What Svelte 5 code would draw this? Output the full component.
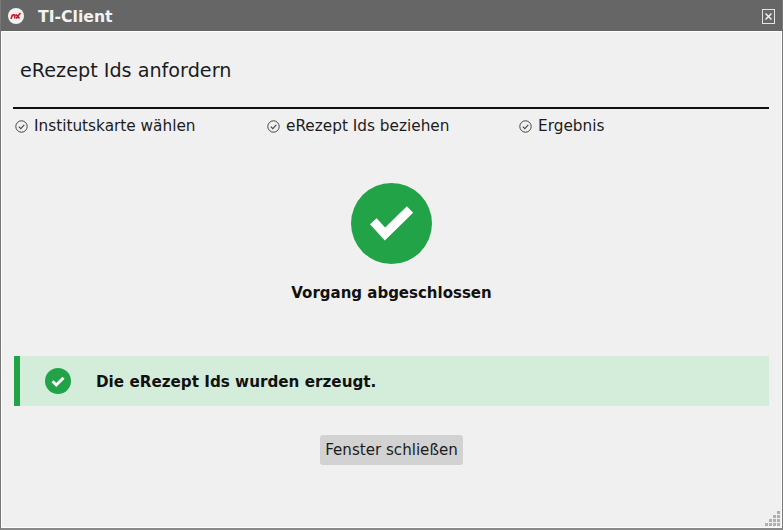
<script>
  const steps = ['Institutskarte wählen', 'eRezept Ids beziehen', 'Ergebnis'];
  // staircase of the resize grip, row by row
  const grip = [0, 0, 0, 1, 0, 0, 1, 1, 0, 1, 1, 1, 1, 1, 1, 1];
</script>

<div class="window">
  <header class="titlebar">
    <svg class="logo" viewBox="0 0 18 18" width="18" height="18" aria-hidden="true">
      <circle cx="9" cy="9" r="8" fill="#f4f1f1" />
      <path d="M4 12 L5.5 7.5 M5.5 9 Q7 7 8 8 L7.6 11.5 M9 7.5 L12.5 11.5 M13.5 6 L9 11.5" fill="none" stroke="#c4172c" stroke-width="1.5" />
    </svg>
    <span class="title">TI-Client</span>
    <span class="close" aria-label="Schließen">
      <svg viewBox="0 0 7 7" width="7" height="7" aria-hidden="true">
        <path d="M0.5 0.5 L6.5 6.5 M6.5 0.5 L0.5 6.5" stroke="#f0f0f0" stroke-width="1.5" />
      </svg>
    </span>
  </header>

  <main class="content">
    <h1>eRezept Ids anfordern</h1>

    <ol class="steps">
      {#each steps as step}
        <li>
          <svg viewBox="0 0 13 13" width="13" height="13" aria-hidden="true">
            <circle cx="6.5" cy="6.5" r="5.7" fill="none" stroke="#444" stroke-width="1" />
            <path d="M3.8 6.6 L5.8 8.6 L9.3 4.8" fill="none" stroke="#444" stroke-width="1.1" />
          </svg>
          <span>{step}</span>
        </li>
      {/each}
    </ol>

    <div class="status">
      <svg viewBox="0 0 81 81" width="81" height="81" aria-hidden="true">
        <circle cx="40.5" cy="40.5" r="40.5" fill="#22a347" />
        <path d="M22.3 38.3 L34 51 L59 26.5" fill="none" stroke="#fff" stroke-width="9" />
      </svg>
      <p>Vorgang abgeschlossen</p>
    </div>

    <div class="alert">
      <svg viewBox="0 0 26 26" width="26" height="26" aria-hidden="true">
        <circle cx="13" cy="13" r="13" fill="#22a347" />
        <path d="M7.5 13.2 L11.3 17 L18.5 9.8" fill="none" stroke="#fff" stroke-width="3" />
      </svg>
      <span>Die eRezept Ids wurden erzeugt.</span>
    </div>

    <div class="actions">
      <button type="button">Fenster schließen</button>
    </div>
  </main>

  <div class="grip" aria-hidden="true">
    {#each grip as dot}
      <i class:on={dot}></i>
    {/each}
  </div>
</div>

<style>
  :global(body) {
    margin: 0;
    background: #f0f0f0;
  }

  .window {
    position: relative;
    width: 783px;
    height: 530px;
    box-sizing: border-box;
    display: flex;
    flex-direction: column;
    font-family: "DejaVu Sans", Verdana, sans-serif;
    color: #1c1c1c;
    background: #f0f0f0;
    border-left: 1px solid #777;
    border-right: 1px solid #777;
    border-bottom: 2px solid #8a8a8a;
    overflow: hidden;
  }

  .titlebar {
    flex: none;
    height: 31px;
    margin: 0 -1px;
    padding: 1px 8px 0 7px;
    display: flex;
    align-items: center;
    background: #666;
    box-sizing: border-box;
  }

  .logo {
    margin-right: 13px;
  }

  .title {
    font-size: 15.7px;
    font-weight: 700;
    color: #f2f2f2;
  }

  .close {
    margin-left: auto;
    width: 13px;
    height: 15px;
    box-sizing: border-box;
    border: 1px solid #e4e4e4;
    display: flex;
    align-items: center;
    justify-content: center;
  }

  .content {
    flex: 1;
    border: 1px solid #fff;
    padding: 0 12px 0 11px;
    box-sizing: border-box;
    display: flex;
    flex-direction: column;
  }

  h1 {
    margin: 0;
    padding: 27px 0 0 7px;
    height: 77px;
    box-sizing: border-box;
    border-bottom: 2px solid #111;
    font-size: 19.2px;
    line-height: 24px;
    font-weight: 400;
  }

  .steps {
    list-style: none;
    margin: 0;
    padding: 7px 0 0 2px;
    display: flex;
    font-size: 15.3px;
    line-height: 20px;
  }

  .steps li {
    flex: none;
    width: 252px;
    display: flex;
    align-items: center;
    gap: 6px;
  }

  .status {
    margin-top: 47px;
    display: flex;
    flex-direction: column;
    align-items: center;
    padding-left: 1px;
  }

  .status p {
    margin: 18px 0 0;
    font-size: 15px;
    line-height: 22px;
    font-weight: 700;
    color: #111;
  }

  .alert {
    margin: 52px 0 0 1px;
    height: 50px;
    display: flex;
    align-items: center;
    background: #d4edda;
    border-left: 6px solid #22a347;
    box-sizing: border-box;
    padding-left: 25px;
    gap: 25px;
    font-size: 15.2px;
    font-weight: 700;
    color: #111;
  }

  .alert span {
    padding-top: 2px;
  }

  .actions {
    margin-top: 29px;
    display: flex;
    justify-content: center;
    padding-left: 1px;
  }

  button {
    height: 30px;
    padding: 0 5px;
    border: none;
    border-radius: 3px;
    background: #d2d2d2;
    font-family: inherit;
    font-size: 15.1px;
    color: #1c1c1c;
  }

  .grip {
    position: absolute;
    right: 2px;
    bottom: 2px;
    display: grid;
    grid-template-columns: repeat(4, 3px);
    grid-auto-rows: 3px;
    gap: 1px;
  }

  .grip i {
    display: block;
  }

  .grip i.on {
    background: #b0b0b0;
  }
</style>
